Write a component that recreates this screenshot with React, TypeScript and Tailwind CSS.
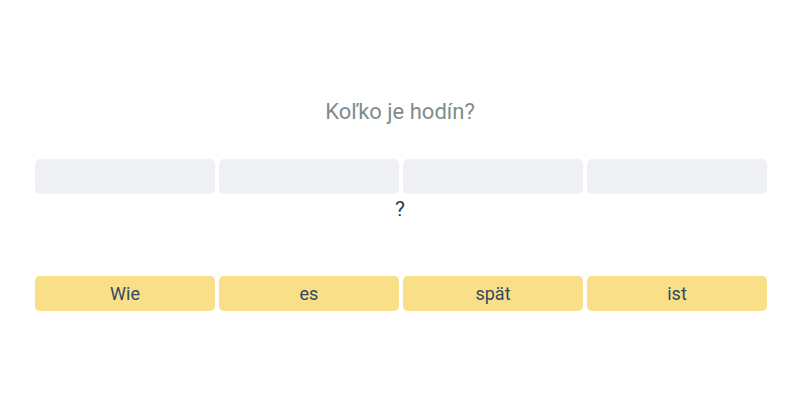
const SLOTS = [0, 1, 2, 3];
const WORDS = ["Wie", "es", "spät", "ist"];

export default function App() {
  return (
    <div
      className="flex h-[400px] w-[800px] flex-col bg-white pt-[97px]"
      style={{ fontFamily: "Roboto, sans-serif" }}>
      <h1 className="text-center text-[22px] leading-[29px] text-[#7f8c8d]">
        Koľko je hodín?
      </h1>

      <div className="ml-[35px] mt-[33px] flex w-[732px] gap-1">
        {SLOTS.map((slot) => (
          <div
            key={slot}
            className="h-[35px] flex-1 rounded-[5px] bg-[#f0f1f4]"
          />
        ))}
      </div>

      <p className="mt-[1px] text-center text-[21px] leading-[28px] text-[#2c3e50]">
        ?
      </p>

      <div className="ml-[35px] mt-[53px] flex w-[732px] gap-1">
        {WORDS.map((word) => (
          <button
            key={word}
            type="button"
            className="flex h-[35px] flex-1 items-center justify-center rounded-[5px] bg-[#f8df88] text-[18px] text-[#34495e]">
            {word}
          </button>
        ))}
      </div>
    </div>
  );
}
